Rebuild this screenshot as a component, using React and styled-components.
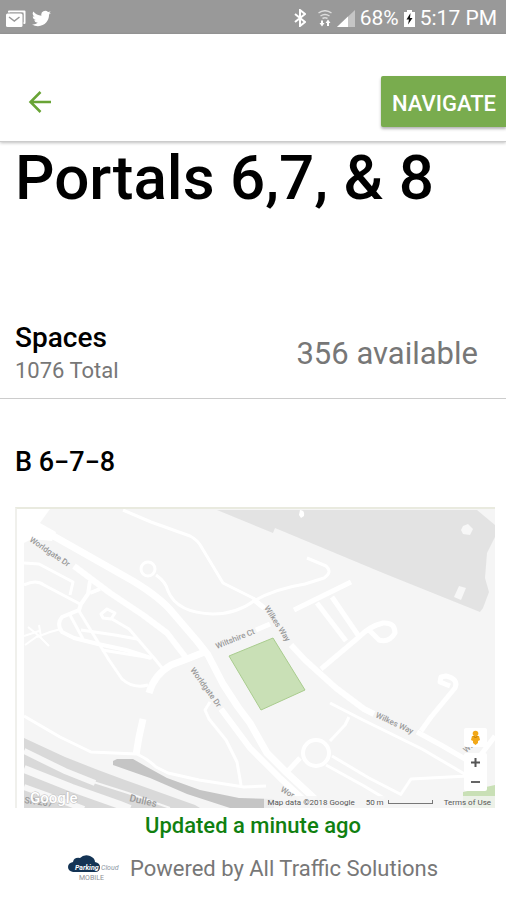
import React from "react";
import styled, { createGlobalStyle } from "styled-components";

const GlobalStyle = createGlobalStyle`
  * {
    box-sizing: border-box;
  }
  body {
    margin: 0;
    background: #fff;
    color: #000;
    font-family: Roboto, "Liberation Sans", sans-serif;
  }
`;

const StatusBar = styled.div`
  display: flex;
  justify-content: space-between;
  align-items: center;
  height: 34px;
  padding: 2px 9px 0 6px;
  background: #999;
  color: #fff;
  font-size: 21px;
`;

const StatusGroup = styled.div`
  display: flex;
  align-items: center;
  gap: ${({ $gap }) => $gap}px;
`;

const Header = styled.header`
  display: flex;
  justify-content: space-between;
  align-items: center;
  padding: 42px 0 14px 24px;
  border-bottom: 1px solid #ccc;
  box-shadow: 0 1px 3px rgba(0, 0, 0, 0.25);
`;

const BackButton = styled.button`
  display: flex;
  padding: 4px;
  border: 0;
  background: none;
  cursor: pointer;
`;

const NavigateButton = styled.button`
  height: 51px;
  padding: 4px 10px 0 11px;
  border: 0;
  border-radius: 2px 0 0 2px;
  background: #79ac4e;
  box-shadow: 0 2px 3px rgba(0, 0, 0, 0.3);
  color: #fff;
  font-family: inherit;
  font-size: 22px;
  font-weight: 500;
  cursor: pointer;
`;

const Title = styled.h1`
  margin: 0;
  padding: 0 15px;
  font-size: 62px;
  font-weight: 500;
  line-height: 72px;
`;

const SpacesRow = styled.section`
  display: flex;
  justify-content: space-between;
  align-items: center;
  margin-top: 94px;
  padding: 12px 28px 12px 15px;
  border-bottom: 1px solid #ccc;
`;

const SpacesLabel = styled.h2`
  margin: 0;
  font-size: 28px;
  font-weight: 500;
  line-height: 36px;
`;

const Total = styled.p`
  margin: 0;
  color: #777;
  font-size: 22px;
  line-height: 30px;
`;

const Available = styled.p`
  margin: 0;
  color: #777;
  font-size: 31px;
`;

const Lot = styled.section`
  padding: 45px 11px 0 15px;
`;

const LotName = styled.h2`
  margin: 0 0 27px;
  font-size: 27px;
  font-weight: 500;
  line-height: 36px;
`;

const MapFrame = styled.div`
  border-top: 2px solid #e9eadf;
  border-left: 2px solid #f0f0ec;
  padding-left: 7px;
`;

const MapCanvas = styled.div`
  position: relative;
  height: 299px;
  overflow: hidden;
`;

const MapDrawing = styled.svg`
  display: block;
  width: 100%;
  height: 100%;
`;

const MapControls = styled.div`
  position: absolute;
  right: 8px;
  bottom: 17px;
  display: flex;
  flex-direction: column;
  gap: 6px;
`;

const ControlBox = styled.div`
  display: flex;
  flex-direction: column;
  border-radius: 2px;
  background: #fff;
`;

const ControlButton = styled.button`
  display: flex;
  justify-content: center;
  align-items: center;
  width: 23px;
  height: 19px;
  padding: 0;
  border: 0;
  background: none;
  cursor: pointer;
`;

const MapFooter = styled.div`
  position: absolute;
  right: 0;
  bottom: 0;
  display: flex;
  align-items: center;
  gap: 11px;
  height: 12px;
  padding: 0 4px;
  background: rgba(245, 245, 245, 0.8);
  color: #555;
  font-size: 8px;
  white-space: nowrap;
`;

const Scale = styled.span`
  display: flex;
  align-items: center;
  gap: 4px;
`;

const ScaleBar = styled.span`
  width: 45px;
  height: 4px;
  border: 1px solid #777;
  border-top: 0;
`;

const TermsLink = styled.a`
  color: inherit;
  text-decoration: none;
`;

const Updated = styled.p`
  margin: 0;
  color: #108010;
  font-size: 22px;
  font-weight: 500;
  line-height: 36px;
  text-align: center;
`;

const Footer = styled.footer`
  display: flex;
  justify-content: center;
  align-items: center;
  gap: 10px;
  padding: 8px 0;
  color: #777;
  font-size: 22px;
  line-height: 34px;
`;

const mapRoads = [
  { width: 7, d: "M6 14L33 29L56 42L109 72Q137 89 149 104L173 132L184 146L199 175L214 198L226 214L243 244L263 264L291 290" },
  { width: 6, d: "M50 57L86 84L119 106L143 124L163 150" },
  { width: 6, d: "M197 200L226 239L256 269L280 291" },
  { width: 7, d: "M125 184Q130 166 147 156L163 150L183 142" },
  { width: 5, d: "M232 121L246 115" },
  { width: 3, d: "M99 1L127 13L166 27Q174 31 178 39L199 74L229 89L241 99" },
  { width: 3, d: "M132 66Q142 73 144 82Q153 104 189 105Q212 105 230 92Q250 80 281 75L300 69Q309 63 302 57L283 49" },
  { width: 5, d: "M229 90L240 99" },
  { width: 6, d: "M267 136L281 151L292 161L312 179L340 200L350 205" },
  { width: 5, d: "M393 223L417 236L441 250L456 247L471 227" },
  { width: 5, d: "M270 101L327 73" },
  { width: 5, d: "M293 94L322 132M308 88L336 129" },
  { width: 5, d: "M297 160L335 128Q346 117 359 114Q371 113 371 124Q365 134 355 131L345 121" },
  { width: 3, d: "M0 54L15 55L49 73L46 86" },
  { width: 3, d: "M0 76Q12 70 20 76L56 95" },
  { width: 4, d: "M66 72L64 85L57 95L55 101L38 108Q32 115 38 123L50 129L74 135L102 141L127 149" },
  { width: 4, d: "M66 84L76 80" },
  { width: 3, d: "M46 106L59 130M55 102L85 151L98 170Q109 180 124 176" },
  { width: 2, d: "M0 127L15 122M4 118L15 127L25 137M1 136L15 126M15 116L17 128M13 128L26 123L37 120" },
  { width: 3, d: "M57 121L91 126L113 130M88 110L105 120L130 149L139 160M78 141L128 149" },
  { width: 3, d: "M0 207L36 228L67 243L113 245Q124 250 132 258L144 264L175 271L220 278L242 277" },
  { width: 7, d: "M119 210L115 228L112 246" },
  { width: 3, d: "M186 193L181 201L185 210L202 231L213 253L217 276" },
  { width: 3, d: "M306 194L339 211L398 240L444 267L387 270L377 285" },
  { width: 3, d: "M325 208L321 216L306 232M302 256L340 277L360 289M308 247L345 269L378 286" },
  { width: 5, d: "M276 249L262 264" },
  { width: 5, d: "M397 222L407 208L431 179Q435 170 422 167L417 168L416 173L426 177" },
];

const envelope = (
  <svg width="20" height="17" viewBox="0 0 20 17" fill="none">
    <path d="M3 3V1.500H18.500V13H16" stroke="#fff" strokeWidth="2" strokeLinejoin="round" />
    <rect x="-1" y="2.500" width="18.500" height="15" rx="2" fill="#999" />
    <rect x="0" y="3.500" width="16.500" height="13.500" rx="1.500" fill="#fff" />
    <path d="M3 7L8.300 11L13.500 7" stroke="#999" strokeWidth="1.500" />
  </svg>
);

const twitter = (
  <svg width="19" height="19" viewBox="0 0 24 24" fill="#fff">
    <path d="M24 4.600a10 10 0 0 1-2.800.8 5 5 0 0 0 2.200-2.700c-1 .5-2 1-3.100 1.200a4.900 4.900 0 0 0-8.400 4.500A14 14 0 0 1 1.700 3.200a4.900 4.900 0 0 0 1.500 6.500 4.900 4.900 0 0 1-2.200-.6v.1a4.900 4.900 0 0 0 3.900 4.800 5 5 0 0 1-2.200.1 4.900 4.900 0 0 0 4.600 3.400A9.900 9.900 0 0 1 0 19.500a14 14 0 0 0 7.500 2.200c9.100 0 14-7.500 14-14v-.6A10 10 0 0 0 24 4.600z" />
  </svg>
);

const bluetooth = (
  <svg width="12" height="18" viewBox="0 0 12 18" fill="none" stroke="#fff" strokeWidth="2">
    <path d="M1 5L11 13L6 17V1L11 5L1 13" />
  </svg>
);

const wifi = (
  <svg width="14" height="17" viewBox="0 0 14 17" fill="none" stroke="#ddd" strokeWidth="1.500">
    <path d="M0.500 3Q7 -1.500 13.500 3M2.500 6Q7 3 11.500 6M4.500 8.500Q7 7 9.500 8.500" />
    <path d="M4 10.500V14M10 12V16" stroke="#fff" strokeWidth="2" />
    <path d="M1.500 13H6.500L4 16.500ZM7.500 13H12.500L10 9.500Z" fill="#fff" stroke="none" />
  </svg>
);

const signal = (
  <svg width="18" height="17" viewBox="0 0 18 17">
    <path d="M0 17L18 0V17Z" fill="#c5c5c5" />
    <path d="M0 17L11 6.600V17Z" fill="#fff" />
  </svg>
);

const battery = (
  <svg width="11" height="17" viewBox="0 0 11 17">
    <path d="M3 0H8V2H11V17H0V2H3Z" fill="#fff" />
    <path d="M6.500 3L2.500 9.500H5L4 14.500L8.500 8H6Z" fill="#111" />
  </svg>
);

function LotMap() {
  return (
    <MapCanvas>
      <MapDrawing viewBox="0 0 471 299" preserveAspectRatio="xMidYMid slice" role="img" aria-label="Map of the lot">
        <rect width="471" height="299" fill="#f5f5f5" />
        <path d="M193 1L249 24L251 19L359 64L456 103L459 99L465 83L461 69L463 44L471 28V16L453 1Z" fill="#e3e3e3" />
        <path d="M276 1Q281 1 280 7L277 9L275 6Z" fill="#fff" />
        <path d="M439 17L444 15L449 20L446 26L439 25L437 21Z" fill="#f7f7f7" />
        <path d="M435 77L442 79L437 91L430 88Z" fill="#f7f7f7" />
        <path d="M0 0H26L16 14L32 23L28 32L8 30L0 34Z" fill="#fff" />
        <path d="M0 229L41 248L74 261L101 271L171 296L176 299H0Z" fill="#d9d9d9" />
        <g fill="none" stroke="#f7f7f7">
          <path d="M0 242L41 262L71 274" strokeWidth="6" />
          <path d="M60 270L104 284L146 299" strokeWidth="2" />
          <path d="M0 260L48 279L96 296L106 300" strokeWidth="8" />
          <path d="M0 278L36 291L60 300" strokeWidth="6" />
        </g>
        <path d="M89 252L93 250H109L123 258L143 269L176 281L215 289L250 290V299H206L163 285L126 269L89 256Z" fill="#c5c5c5" />
        <g fill="none" stroke="#fff" strokeLinejoin="round">
          {mapRoads.map(({ d, width }) => (
            <path key={d} d={d} strokeWidth={width} />
          ))}
          <circle cx="124" cy="60" r="7" strokeWidth="3" />
          <circle cx="292" cy="244" r="13" strokeWidth="4" />
          <path d="M77 105L83 100L91 104L87 110L79 109Z" strokeWidth="3" />
        </g>
        <path d="M205 147L249 129L281 181L237 201Z" fill="#c9e0b6" stroke="#a9cc8e" strokeWidth="1" />
        <path d="M439 299V283L471 276V299Z" fill="#c9e0b6" />
        <g fill="#999" fontFamily="Roboto, sans-serif" fontSize="8" fontWeight="500">
          <text transform="translate(5 32) rotate(34)">Worldgate Dr</text>
          <text transform="translate(193 140) rotate(-22)">Wiltshire Ct</text>
          <text transform="translate(240 99) rotate(57)">Wilkes Way</text>
          <text transform="translate(166 161) rotate(54)">Worldgate Dr</text>
          <text transform="translate(351 208) rotate(25)">Wilkes Way</text>
          <text transform="translate(256 282) rotate(30)">Wor</text>
          <text transform="translate(442 244) rotate(-40)">Wi</text>
          <text fontSize="10" transform="translate(105 292) rotate(13)">Dulles</text>
          <text fontSize="9" transform="translate(0 294) rotate(8)">SR 267</text>
        </g>
        <text x="6" y="294" fill="#fff" stroke="#bbb" strokeWidth="1" paintOrder="stroke" fontFamily="Roboto, sans-serif" fontSize="15" fontWeight="500">
          Google
        </text>
      </MapDrawing>
      <MapControls>
        <ControlBox>
          <ControlButton aria-label="Street view">
            <svg width="9" height="15" viewBox="0 0 9 15">
              <circle cx="4.500" cy="3.500" r="2.800" fill="#f2a818" />
              <path d="M1 6H8L9 10L7 11V13L4.500 15L2 13V11L0 10Z" fill="#f2a818" />
              <path d="M2.500 6L4.500 8L6.500 6" fill="none" stroke="#b87808" />
            </svg>
          </ControlButton>
        </ControlBox>
        <ControlBox>
          <ControlButton aria-label="Zoom in">
            <svg width="9" height="9" viewBox="0 0 9 9" stroke="#555" strokeWidth="2">
              <path d="M0 4.500H9M4.500 0V9" />
            </svg>
          </ControlButton>
          <ControlButton aria-label="Zoom out">
            <svg width="9" height="9" viewBox="0 0 9 9" stroke="#666" strokeWidth="2">
              <path d="M0 5H9" />
            </svg>
          </ControlButton>
        </ControlBox>
      </MapControls>
      <MapFooter>
        <span>Map data ©2018 Google</span>
        <Scale>
          50 m
          <ScaleBar />
        </Scale>
        <TermsLink href="#terms">Terms of Use</TermsLink>
      </MapFooter>
    </MapCanvas>
  );
}

function ParkingCloudLogo() {
  return (
    <svg width="52" height="28" viewBox="0 0 52 28" role="img" aria-label="ParkingCloud Mobile">
      <path d="M5 17Q0 16 0 12Q0 8 5 7Q6 2 12 3Q16 -1 22 1Q27 3 27 7Q32 8 32 12Q32 17 27 17Z" fill="#143455" />
      <g fontFamily="Roboto, sans-serif">
        <text x="7" y="15" fill="#fff" fontSize="7" fontWeight="700" fontStyle="italic">Parking</text>
        <text x="33" y="15" fill="#8a96a3" fontSize="7" fontStyle="italic">Cloud</text>
        <text x="11" y="25" fill="#8e8e96" fontSize="7">MOBILE</text>
      </g>
    </svg>
  );
}

export default function App() {
  return (
    <>
      <GlobalStyle />
      <StatusBar>
        <StatusGroup $gap={6}>
          {envelope}
          {twitter}
        </StatusGroup>
        <StatusGroup $gap={5}>
          <StatusGroup $gap={12}>
            {bluetooth}
            {wifi}
          </StatusGroup>
          {signal}
          <span>68%</span>
          {battery}
          <span>5:17 PM</span>
        </StatusGroup>
      </StatusBar>
      <Header>
        <BackButton aria-label="Back">
          <svg width="24" height="24" viewBox="0 0 24 24" fill="none" stroke="#69a436" strokeWidth="2.500">
            <path d="M23 12H3M12.500 2L2.500 12L12.500 22" />
          </svg>
        </BackButton>
        <NavigateButton>NAVIGATE</NavigateButton>
      </Header>
      <main>
        <Title>Portals 6,7, &amp; 8</Title>
        <SpacesRow>
          <div>
            <SpacesLabel>Spaces</SpacesLabel>
            <Total>1076 Total</Total>
          </div>
          <Available>356 available</Available>
        </SpacesRow>
        <Lot>
          <LotName>B 6−7−8</LotName>
          <MapFrame>
            <LotMap />
          </MapFrame>
        </Lot>
        <Updated>Updated a minute ago</Updated>
      </main>
      <Footer>
        <ParkingCloudLogo />
        <span>Powered by All Traffic Solutions</span>
      </Footer>
    </>
  );
}
